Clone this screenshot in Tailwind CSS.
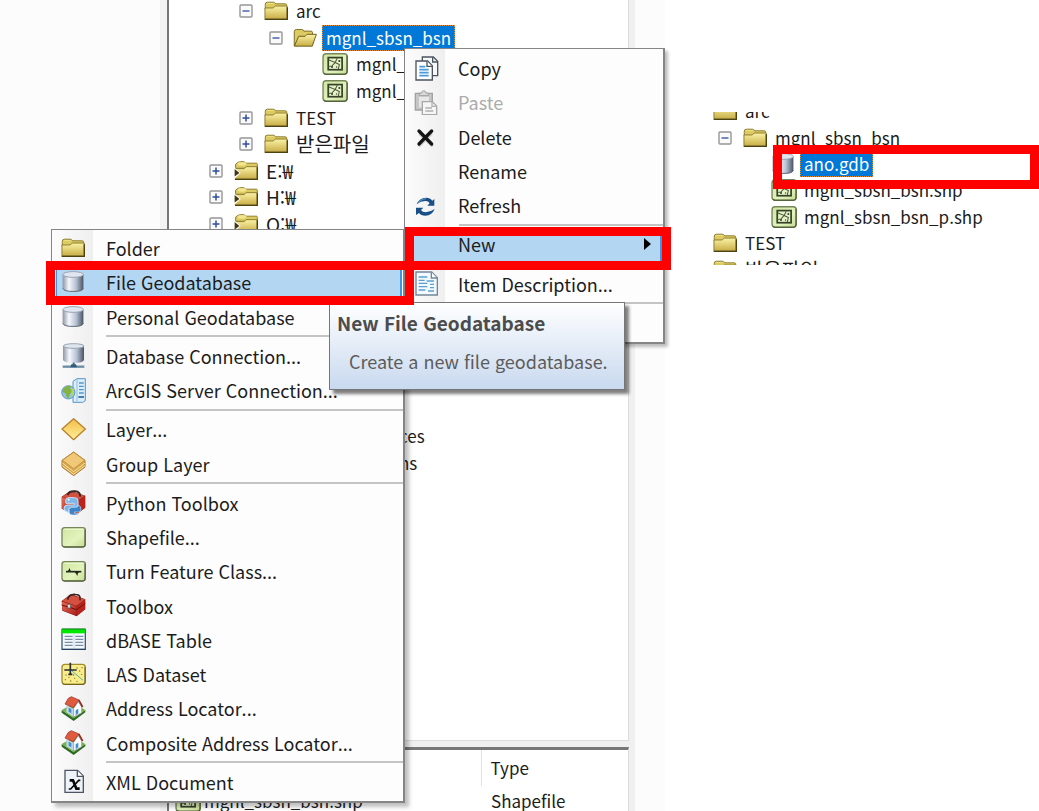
<!DOCTYPE html>
<html lang="ko">
<head>
  <meta charset="utf-8">
  <meta name="viewport" content="width=device-width, initial-scale=1">
  <title>Catalog</title>
  <script src="https://cdn.jsdelivr.net/npm/@tailwindcss/browser@4"></script>
</head>
<body class="bg-white font-['Noto_Sans_CJK_KR','Noto_Sans',sans-serif] text-[18px] leading-6 text-[#1c1c1c]">

<!-- Icon sprite -->
<svg width="0" height="0" class="absolute" aria-hidden="true">
  <defs>
    <linearGradient id="gold" x1="0" y1="0" x2="0" y2="1"><stop offset="0" stop-color="#fbf3a8"/><stop offset="1" stop-color="#c9ae45"/></linearGradient>
    <linearGradient id="steel" x1="0" x2="1"><stop offset="0" stop-color="#8b95a4"/><stop offset=".3" stop-color="#f6f8fc"/><stop offset=".65" stop-color="#b6c2d3"/><stop offset="1" stop-color="#485263"/></linearGradient>
    <linearGradient id="amber" x1="0" y1="0" x2="0" y2="1"><stop offset="0" stop-color="#f2bd4a"/><stop offset="1" stop-color="#fff09a"/></linearGradient>
    <linearGradient id="lime" x1="0" y1="0" x2="1" y2="1"><stop offset="0" stop-color="#cfe6a0"/><stop offset=".6" stop-color="#e3f3bd"/><stop offset="1" stop-color="#c5dc92"/></linearGradient>
    <linearGradient id="red" x1="0" y1="0" x2="1" y2="1"><stop offset="0" stop-color="#e46a58"/><stop offset="1" stop-color="#a81f18"/></linearGradient>

    <symbol id="folder" viewBox="0 0 75 75">
      <path d="M4 20v-4q0-6 7-6h18q5 0 7 5h30q5 0 5 5v12H4z" fill="#dccb62" stroke="#8c7a2c" stroke-width="3"/>
      <path d="M8 16q1-3 5-3h14q4 0 6 3z" fill="#f3e68f"/>
      <path d="M3 28h26l6-6h37v40H3z" fill="url(#gold)" stroke="#8c7a2c" stroke-width="3"/>
      <path d="M2 64h71V26" fill="none" stroke="#4d430f" stroke-width="4"/>
    </symbol>
    <symbol id="folder-open" viewBox="0 0 75 75">
      <path d="M4 62V17q0-6 7-6h16q5 0 7 5h22q5 0 5 5v12H22z" fill="#dccb62" stroke="#7d6b22" stroke-width="3"/>
      <path d="M4 63 18 32h20l6-6h29L60 63z" fill="url(#gold)" stroke="#6b5b18" stroke-width="3"/>
    </symbol>
    <symbol id="folder-link" viewBox="0 0 75 75">
      <path d="M5 26V16q6-8 20-8 9 0 12 5h33q3 0 3 4v12H5z" fill="#dccb62" stroke="#8c7a2c" stroke-width="3"/>
      <ellipse cx="25" cy="15" rx="14" ry="6" fill="#f3e68f"/>
      <path d="M4 30h28l6-6h34v38H4z" fill="url(#gold)" stroke="#8c7a2c" stroke-width="3"/>
      <path d="M3 64h70V26" fill="none" stroke="#4d430f" stroke-width="4"/>
      <path d="M0 28h3l18 16L3 60H0z" fill="#fff"/><path d="M2 31v24l15-11z" fill="#403712"/>
    </symbol>
    <symbol id="shape" viewBox="0 0 75 75">
      <rect x="3" y="8" width="70" height="59" rx="9" fill="url(#lime)" stroke="#77865a" stroke-width="4"/>
      <path d="M5 64q2 3 6 3h55q5 0 6-6V14" fill="none" stroke="#4b5936" stroke-width="3"/>
      <rect x="18" y="19" width="40" height="35" fill="#e6f3c6" stroke="#37422a" stroke-width="5"/>
      <path d="M20 26l18 7 6-12M38 33l12 6-3 13M38 33l-9 10-8 2" fill="none" stroke="#4a563a" stroke-width="3"/>
      <circle cx="29" cy="46" r="3" fill="#37422a"/><circle cx="50" cy="29" r="3" fill="#37422a"/><circle cx="42" cy="46" r="2" fill="#37422a"/>
    </symbol>
    <symbol id="db" viewBox="0 0 75 75">
      <path d="M5 14v44q4 10 33 10t32-10V14z" fill="url(#steel)"/>
      <path d="M6 58q4 9 32 9t32-9" fill="none" stroke="#5b6575" stroke-width="3"/>
      <ellipse cx="38" cy="14" rx="32" ry="9" fill="#dfe6ef" stroke="#97a1b0" stroke-width="3"/>
    </symbol>
    <symbol id="db-net" viewBox="0 0 75 75">
      <path d="M6 9v42q4 9 32 9t31-9V9z" fill="url(#steel)"/>
      <ellipse cx="38" cy="9" rx="31" ry="7" fill="#dfe6ef" stroke="#97a1b0" stroke-width="3"/>
      <path d="M38 59v10" stroke="#3c6684" stroke-width="6"/><path d="M5 71h65" stroke="#6a8ca6" stroke-width="7"/><path d="M31 64h14l3 9H28z" fill="#335c79"/>
    </symbol>
    <symbol id="server" viewBox="0 0 75 75">
      <path d="M36 10 48 2h25v66l-8 5H36z" fill="#d9edfa" stroke="#5797c4" stroke-width="3"/>
      <path d="M48 4v66" stroke="#8fbfe0" stroke-width="3"/>
      <path d="M54 15h14M54 25h14M54 35h14M54 45h14" stroke="#5797c4" stroke-width="4"/><path d="M52 57h17" stroke="#2d689a" stroke-width="5"/>
      <circle cx="22" cy="43" r="20" fill="#8fc3e4" stroke="#3f7ba8" stroke-width="2"/>
      <path d="M7 32q10-11 23-8l-3 8 9 7-9 9-4 13q-9-3-8-14l-10-5z" fill="#84b343"/><path d="M32 30l8 4-2 17-8 6z" fill="#b5d667"/>
    </symbol>
    <symbol id="layer" viewBox="0 0 75 75">
      <path d="M38 5 73 36 38 68 3 36z" fill="url(#amber)" stroke="#b8822a" stroke-width="4" stroke-linejoin="round"/>
    </symbol>
    <symbol id="layers" viewBox="0 0 75 75">
      <path d="M38 3 72 28v20L38 74 3 48V28z" fill="#d7a54a" stroke="#a7772f" stroke-width="3"/>
      <path d="M4 36l34 26 34-26M4 44l34 26 34-26" fill="none" stroke="#fbe5a3" stroke-width="3"/>
      <path d="M38 4 71 28 38 53 4 28z" fill="#f0c877" stroke="#b88638" stroke-width="2"/>
    </symbol>
    <symbol id="toolbox" viewBox="0 0 75 75">
      <path d="M2 24 30 3l43 16v30L47 70 4 53z" fill="#8c1b16"/>
      <path d="M3 26 46 39v29L4 52z" fill="url(#red)"/><path d="M3 24 30 6l42 13-25 19z" fill="#d4503f"/>
      <path d="M47 39 72 21v27L47 68z" fill="#b9231b"/>
      <path d="M20 20q2-17 23-16 17 0 14 18" fill="none" stroke="#3b2524" stroke-width="5"/>
      <path d="M2 36l45 14 26-19" fill="none" stroke="#641311" stroke-width="3"/><path d="M20 34h8v11h-8z" fill="#eee" stroke="#555" stroke-width="2"/>
    </symbol>
    <symbol id="python" viewBox="0 0 75 75">
      <path d="M2 20 28 2l45 15v36L45 74 2 56z" fill="#8c1b16"/>
      <path d="M3 21 45 36v36L3 56z" fill="url(#red)"/><path d="M4 20 28 3l44 14-27 18z" fill="#d4503f"/>
      <path d="M46 36 72 19v34L46 73z" fill="#b9231b"/>
      <path d="M20 15q4-12 22-11 17 1 15 16" fill="none" stroke="#3b2524" stroke-width="6"/>
      <path d="M14 31q0-8 10-8h16q11 0 11 9v13q0 7-8 7H29q-6 0-6 6v9q-13-1-14-12 0-9 10-10h21v-5H15z" fill="#7db7e9" stroke="#c9e2f7" stroke-width="3"/>
      <path d="M25 59q0-7 8-7h12q6 0 6-7 9 2 9 13 0 7-8 8H40v4h13q-2 5-13 5-15 0-15-7z" fill="#3c83c8" stroke="#c9e2f7" stroke-width="2"/>
      <circle cx="23" cy="29" r="3" fill="#fff"/>
    </symbol>
    <symbol id="shapefile" viewBox="0 0 75 75">
      <rect x="3" y="8" width="70" height="58" rx="8" fill="url(#lime)" stroke="#77865a" stroke-width="4"/>
      <path d="M5 63q2 3 6 3h55q6 0 6-6V14" fill="none" stroke="#4b5936" stroke-width="3"/>
      <path d="M10 13h56" stroke="#edf8d4" stroke-width="3"/>
    </symbol>
    <symbol id="turn" viewBox="0 0 75 75">
      <use href="#shapefile" width="75" height="75"/>
      <path d="M15 38h46" stroke="#20281a" stroke-width="5"/><path d="M19 39l7-12 4 12zM41 38h15l-5 4-2 9-4-7z" fill="#20281a"/>
    </symbol>
    <symbol id="dbase" viewBox="0 0 75 75">
      <path d="M3 7h70v60H3z" fill="#f3f8ff" stroke="#3f5f80" stroke-width="4"/><path d="M3 6h70v13H3z" fill="#00e800"/><path d="M3 6h70" stroke="#12851d" stroke-width="3"/>
      <path d="M11 28h24M11 37h24M11 46h24M11 55h24M43 28h24M43 37h24M43 46h24M43 55h24" stroke="#7d8da2" stroke-width="4"/>
      <path d="M39 20v44" stroke="#bccada" stroke-width="2"/><path d="M3 67h71" stroke="#243a56" stroke-width="3"/>
    </symbol>
    <symbol id="las" viewBox="0 0 75 75">
      <rect x="3" y="7" width="70" height="60" rx="9" fill="#f8ec8b" stroke="#a38d2c" stroke-width="4"/>
      <path d="M5 64q2 3 6 3h55q6 0 6-6V15" fill="none" stroke="#6c5b17" stroke-width="3"/>
      <path d="M31 25 66 55" stroke="#55b4b0" stroke-width="3"/>
      <g fill="#80712a"><circle cx="15" cy="39" r="2"/><circle cx="24" cy="46" r="2"/><circle cx="13" cy="53" r="2"/><circle cx="29" cy="57" r="2"/><circle cx="41" cy="49" r="2"/><circle cx="48" cy="58" r="2"/><circle cx="56" cy="27" r="2"/><circle cx="62" cy="37" r="2"/><circle cx="48" cy="18" r="2"/><circle cx="63" cy="17" r="2"/><circle cx="38" cy="39" r="2"/></g>
      <path d="M28 2v36M10 24h37M22 37h12" stroke="#292d35" stroke-width="5"/>
    </symbol>
    <symbol id="house" viewBox="0 0 75 75">
      <path d="M2 42 38 66l35-24v7L38 75 2 50z" fill="#2f6b22"/><path d="M2 42 38 22l35 20-35 25z" fill="#72b54a"/>
      <path d="M16 27 38 39v24L16 49z" fill="#c2d6e6"/><path d="M38 37 52 17l10 16v17L38 63z" fill="#fff" stroke="#8d9098" stroke-width="2"/>
      <path d="M44 43l8-5v14l-8 6z" fill="#3e8fd0"/><path d="M23 35l8 4v13l-8-5z" fill="#3e8fd0"/>
      <path d="M12 24 22 7 31 2l23 10-17 23z" fill="#e05a3f" stroke="#8f2d1d" stroke-width="2"/><path d="M53 12 65 33" stroke="#8f2d1d" stroke-width="5"/>
    </symbol>
    <symbol id="xml" viewBox="0 0 75 75">
      <path d="M12 4h38l17 17v49H12z" fill="#edf3f8" stroke="#4c5662" stroke-width="4"/><path d="M49 5v17h17" fill="#fff" stroke="#4c5662" stroke-width="4"/>
      <path d="M26 34h10l10 25h10" fill="none" stroke="#080808" stroke-width="8"/><path d="M58 34h-5L29 60h-6" fill="none" stroke="#080808" stroke-width="5"/>
    </symbol>
    <symbol id="copy" viewBox="0 0 75 75">
      <path d="M25 3h33l13 13v43H25z" fill="#f6f8fa" stroke="#4c545d" stroke-width="4"/><path d="M56 4v14h14" fill="none" stroke="#4c545d" stroke-width="4"/>
      <path d="M6 15h35l14 14v43H6z" fill="#fff" stroke="#4c545d" stroke-width="4"/><path d="M39 16v15h15" fill="#fff" stroke="#4c545d" stroke-width="4"/>
      <path d="M16 32h18M16 41h28M16 50h28M16 59h28" stroke="#4a9bdc" stroke-width="5"/>
    </symbol>
    <symbol id="paste" viewBox="0 0 75 75">
      <path d="M4 10h51v50H4z" fill="#c6c6c6" stroke="#a2a2a2" stroke-width="4"/><path d="M15 20h30v32H15z" fill="#e8e8e8"/>
      <path d="M16 17v-8h7q0-7 6-7t7 7h7v8z" fill="#d8d8d8" stroke="#a2a2a2" stroke-width="3"/>
      <path d="M25 35h30l13 13v26H25z" fill="#f6f6f6" stroke="#a9a9a9" stroke-width="4"/><path d="M54 36v13h13M34 54h20M34 63h24" fill="none" stroke="#b0b0b0" stroke-width="4"/>
    </symbol>
    <symbol id="delete" viewBox="0 0 75 75">
      <path d="M16 28 56 67M53 28 14 67" stroke="#d0d0d0" stroke-width="9"/><path d="M15 21 53 60M53 21 15 60" stroke="#151515" stroke-width="10" stroke-linecap="round"/>
    </symbol>
    <symbol id="refresh" viewBox="0 0 75 75">
      <path d="M8 34q8-20 28-20 13 0 19 9l6-5v20H40l7-7q-4-8-14-7-13 0-25 10z" fill="#174f86"/>
      <path d="M62 48q-8 20-28 20-13 0-19-8l-9 6V44h22l-7 7q4 7 14 7 13 0 27-10z" fill="#174f86"/>
      <path d="M9 33q10-14 27-16" fill="none" stroke="#5f9acb" stroke-width="3"/>
    </symbol>
    <symbol id="doc" viewBox="0 0 75 75">
      <path d="M6 3h47l17 17v52H6z" fill="#f2f9ff" stroke="#71879b" stroke-width="4"/><path d="M52 4v17h17" fill="#fff" stroke="#71879b" stroke-width="4"/>
      <path d="M14 18h26M14 28h18M38 30h22M14 37h26M48 40h12M14 47h26M48 50h12M14 57h20M42 60h18" stroke="#5d9fd1" stroke-width="4"/>
    </symbol>
    <symbol id="minus" viewBox="0 0 14 14">
      <rect x="1" y="1" width="12" height="12" rx="1" fill="#fafafa" stroke="#969696" stroke-width="1.4"/><path d="M3.5 7h7" stroke="#4059a5" stroke-width="1.4"/>
    </symbol>
    <symbol id="plus" viewBox="0 0 14 14">
      <rect x="1" y="1" width="12" height="12" rx="1" fill="#fafafa" stroke="#969696" stroke-width="1.4"/><path d="M3.5 7h7M7 3.500v7" stroke="#314d9e" stroke-width="1.5"/>
    </symbol>
  </defs>
</svg>

<div class="relative flex h-screen overflow-hidden">

  <!-- Catalog dialog -->
  <main class="flex w-[64%] bg-[#fcfcfc]">
    <div class="ml-[160px] w-[7px] bg-[#f3f3f3]"></div>
    <div class="flex min-w-0 flex-1 flex-col bg-[#f0f0f0] text-[17px]">
      <section class="flex-1 overflow-hidden border-r border-b border-l-2 border-r-[#dcdcdc] border-b-[#dcdcdc] border-l-[#777] bg-white" aria-label="Catalog tree">
        <ul class="-mt-[2px] flex h-[478px] flex-col whitespace-nowrap">
          <li class="flex flex-1 items-center pl-[70px]"><button class="mr-[11px]" aria-label="Collapse arc"><svg class="size-[14px]"><use href="#minus"/></svg></button><svg class="mr-2 size-6"><use href="#folder"/></svg>arc</li>
          <li class="flex flex-1 items-center pl-[100px]"><button class="mr-[10px]" aria-label="Collapse mgnl_sbsn_bsn"><svg class="size-[14px]"><use href="#minus"/></svg></button><svg class="mr-[5px] size-6"><use href="#folder-open"/></svg><span class="border border-dotted border-[#e08a3c] bg-[#0078d7] px-[3px] text-white">mgnl_sbsn_bsn</span></li>
          <li class="flex flex-1 items-center pl-[153px]"><svg class="mr-2 size-[26px]"><use href="#shape"/></svg>mgnl_</li>
          <li class="flex flex-1 items-center pl-[153px]"><svg class="mr-2 size-[26px]"><use href="#shape"/></svg>mgnl_</li>
          <li class="flex flex-1 items-center pl-[70px]"><button class="mr-[11px]" aria-label="Expand TEST"><svg class="size-[14px]"><use href="#plus"/></svg></button><svg class="mr-2 size-6"><use href="#folder"/></svg>TEST</li>
          <li class="flex flex-1 items-center pl-[70px]"><button class="mr-[11px]" aria-label="Expand 받은파일"><svg class="size-[14px]"><use href="#plus"/></svg></button><svg class="mr-2 size-6"><use href="#folder"/></svg><span class="text-[20px]">받은파일</span></li>
          <li class="flex flex-1 items-center pl-10"><button class="mr-[11px]" aria-label="Expand E"><svg class="size-[14px]"><use href="#plus"/></svg></button><svg class="mr-2 size-6"><use href="#folder-link"/></svg><span class="text-[19px]">E:₩</span></li>
          <li class="flex flex-1 items-center pl-10"><button class="mr-[11px]" aria-label="Expand H"><svg class="size-[14px]"><use href="#plus"/></svg></button><svg class="mr-2 size-6"><use href="#folder-link"/></svg><span class="text-[19px]">H:₩</span></li>
          <li class="flex flex-1 items-center pl-10"><button class="mr-[11px]" aria-label="Expand O"><svg class="size-[14px]"><use href="#plus"/></svg></button><svg class="mr-2 size-6"><use href="#folder-link"/></svg><span class="text-[19px]">O:₩</span></li>
          <li class="flex-[7]"></li>
          <li class="flex flex-1 items-center pl-[230px]">ces</li>
          <li class="flex flex-1 items-center pl-[230px]">ns</li>
        </ul>
      </section>

      <section class="mt-[6px] h-[64px] overflow-hidden border-t-[3px] border-r border-l-2 border-t-[#777] border-r-[#dcdcdc] border-l-[#777] bg-white">
        <table class="w-full table-fixed whitespace-nowrap text-left">
          <thead>
            <tr class="h-[36px]">
              <th class="w-[312px] border-r border-[#e2e2e2] font-normal"></th>
              <th class="pl-[9px] font-normal">Type</th>
            </tr>
          </thead>
          <tbody>
            <tr class="h-[30px]">
              <td class="pl-[6px]"><div class="flex items-center"><svg class="mr-[3px] size-[26px]"><use href="#shape"/></svg>mgnl_sbsn_bsn.shp</div></td>
              <td class="pl-[10px]">Shapefile</td>
            </tr>
          </tbody>
        </table>
      </section>
    </div>
    <div class="w-[6px] bg-[#f0f0f0]"></div>
    <div class="w-[30px]"></div>
  </main>

  <!-- Tree after the geodatabase is created -->
  <aside class="mt-28 ml-12 h-[153px] flex-1 overflow-hidden text-[17px]">
    <ul class="-mt-[14px] flex h-[185px] flex-col whitespace-nowrap">
      <li class="flex flex-1 items-center"><svg class="mr-2 size-6"><use href="#folder"/></svg>arc</li>
      <li class="flex flex-1 items-center pl-[5px]"><button class="mr-[11px]" aria-label="Collapse mgnl_sbsn_bsn"><svg class="size-[14px]"><use href="#minus"/></svg></button><svg class="mr-2 size-6"><use href="#folder"/></svg>mgnl_sbsn_bsn</li>
      <li class="flex flex-1 items-center pl-[58px]"><svg class="mr-[5px] size-6"><use href="#db"/></svg><span class="border border-dotted border-[#e08a3c] bg-[#0078d7] px-[3px] text-white">ano.gdb</span></li>
      <li class="flex flex-1 items-center pl-[58px]"><svg class="mr-[7px] size-[26px]"><use href="#shape"/></svg>mgnl_sbsn_bsn.shp</li>
      <li class="flex flex-1 items-center pl-[58px]"><svg class="mr-[7px] size-[26px]"><use href="#shape"/></svg>mgnl_sbsn_bsn_p.shp</li>
      <li class="flex flex-1 items-center"><svg class="mr-2 size-6"><use href="#folder"/></svg>TEST</li>
      <li class="flex flex-1 items-center"><svg class="mr-2 size-6"><use href="#folder"/></svg><span class="text-[20px]">받은파일</span></li>
    </ul>
  </aside>

  <!-- Context menu -->
  <div role="menu" class="absolute top-12 left-[404px] flex h-[296px] w-[261px] flex-col border border-r-2 border-b-2 border-[#858585] bg-[linear-gradient(to_right,#fcfcfc,#efefef_40px,#fdfdfd_40px)] pt-[2px] pr-px pb-[2px] pl-1 shadow-[3px_3px_3px_rgba(0,0,0,0.25)]">
    <button role="menuitem" class="flex flex-1 items-center gap-4 border border-transparent text-left"><span class="flex w-8 justify-center"><svg class="size-[25px]"><use href="#copy"/></svg></span>Copy</button>
    <button role="menuitem" disabled class="flex flex-1 items-center gap-4 border border-transparent text-left text-[#ababab]"><span class="flex w-8 justify-center"><svg class="size-[25px]"><use href="#paste"/></svg></span>Paste</button>
    <button role="menuitem" class="flex flex-1 items-center gap-4 border border-transparent text-left"><span class="flex w-8 justify-center"><svg class="size-[25px]"><use href="#delete"/></svg></span>Delete</button>
    <button role="menuitem" class="flex flex-1 items-center gap-4 border border-transparent text-left"><span class="w-8"></span>Rename</button>
    <button role="menuitem" class="flex flex-1 items-center gap-4 border border-transparent text-left"><span class="flex w-8 justify-center"><svg class="size-[25px]"><use href="#refresh"/></svg></span>Refresh</button>
    <div role="separator" class="-mr-px ml-[50px] flex h-[5px] items-center"><div class="h-[2px] w-full bg-[#c4c4c4]"></div></div>
    <button role="menuitem" aria-haspopup="menu" class="flex flex-1 items-center gap-4 border border-r-2 border-[#3a96e6] bg-[#b3d7f3] text-left"><span class="w-8"></span>New<svg class="mr-[9px] ml-auto h-3 w-[7px]" viewBox="0 0 7 12"><path d="M0 0l7 6-7 6z" fill="#000"/></svg></button>
    <div role="separator" class="-mr-px ml-[50px] flex h-[5px] items-center"><div class="h-[2px] w-full bg-[#c4c4c4]"></div></div>
    <button role="menuitem" class="flex flex-1 items-center gap-4 border border-transparent text-left"><span class="flex w-8 justify-center"><svg class="size-[25px]"><use href="#doc"/></svg></span>Item Description...</button>
    <div role="separator" class="-mr-px ml-[50px] flex h-[5px] items-center"><div class="h-[2px] w-full bg-[#c4c4c4]"></div></div>
    <button role="menuitem" aria-label="Properties" class="flex-1 border border-transparent"></button>
  </div>

  <!-- New submenu -->
  <div role="menu" class="absolute top-[229px] left-[51px] flex h-[574px] w-[354px] flex-col border border-r-2 border-b-2 border-[#858585] bg-[linear-gradient(to_right,#fcfcfc,#efefef_41px,#fdfdfd_41px)] pt-px pr-px pb-[2px] pl-1 shadow-[4px_4px_4px_rgba(0,0,0,0.25)]">
    <button role="menuitem" class="flex flex-1 items-center gap-[17px] border border-transparent text-left"><span class="flex w-8 justify-center"><svg class="size-6"><use href="#folder"/></svg></span>Folder</button>
    <button role="menuitem" class="flex flex-1 items-center gap-[17px] border border-r-2 border-[#3a96e6] bg-[#b3d7f3] text-left"><span class="flex w-8 justify-center"><svg class="size-6"><use href="#db"/></svg></span>File Geodatabase</button>
    <button role="menuitem" class="flex flex-1 items-center gap-[17px] border border-transparent text-left"><span class="flex w-8 justify-center"><svg class="size-6"><use href="#db"/></svg></span>Personal Geodatabase</button>
    <div role="separator" class="-mr-px ml-[50px] flex h-[5px] items-center"><div class="h-[2px] w-full bg-[#c4c4c4]"></div></div>
    <button role="menuitem" class="flex flex-1 items-center gap-[17px] border border-transparent text-left"><span class="flex w-8 justify-center"><svg class="size-[25px]"><use href="#db-net"/></svg></span>Database Connection...</button>
    <button role="menuitem" class="flex flex-1 items-center gap-[17px] border border-transparent text-left"><span class="flex w-8 justify-center"><svg class="size-[25px]"><use href="#server"/></svg></span>ArcGIS Server Connection...</button>
    <div role="separator" class="-mr-px ml-[50px] flex h-[5px] items-center"><div class="h-[2px] w-full bg-[#c4c4c4]"></div></div>
    <button role="menuitem" class="flex flex-1 items-center gap-[17px] border border-transparent text-left"><span class="flex w-8 justify-center"><svg class="size-[25px]"><use href="#layer"/></svg></span>Layer...</button>
    <button role="menuitem" class="flex flex-1 items-center gap-[17px] border border-transparent text-left"><span class="flex w-8 justify-center"><svg class="size-[25px]"><use href="#layers"/></svg></span>Group Layer</button>
    <div role="separator" class="-mr-px ml-[50px] flex h-[5px] items-center"><div class="h-[2px] w-full bg-[#c4c4c4]"></div></div>
    <button role="menuitem" class="flex flex-1 items-center gap-[17px] border border-transparent text-left"><span class="flex w-8 justify-center"><svg class="size-[25px]"><use href="#python"/></svg></span>Python Toolbox</button>
    <button role="menuitem" class="flex flex-1 items-center gap-[17px] border border-transparent text-left"><span class="flex w-8 justify-center"><svg class="size-[25px]"><use href="#shapefile"/></svg></span>Shapefile...</button>
    <button role="menuitem" class="flex flex-1 items-center gap-[17px] border border-transparent text-left"><span class="flex w-8 justify-center"><svg class="size-[25px]"><use href="#turn"/></svg></span>Turn Feature Class...</button>
    <button role="menuitem" class="flex flex-1 items-center gap-[17px] border border-transparent text-left"><span class="flex w-8 justify-center"><svg class="size-[25px]"><use href="#toolbox"/></svg></span>Toolbox</button>
    <button role="menuitem" class="flex flex-1 items-center gap-[17px] border border-transparent text-left"><span class="flex w-8 justify-center"><svg class="size-[25px]"><use href="#dbase"/></svg></span>dBASE Table</button>
    <button role="menuitem" class="flex flex-1 items-center gap-[17px] border border-transparent text-left"><span class="flex w-8 justify-center"><svg class="size-[25px]"><use href="#las"/></svg></span>LAS Dataset</button>
    <button role="menuitem" class="flex flex-1 items-center gap-[17px] border border-transparent text-left"><span class="flex w-8 justify-center"><svg class="size-[25px]"><use href="#house"/></svg></span>Address Locator...</button>
    <button role="menuitem" class="flex flex-1 items-center gap-[17px] border border-transparent text-left"><span class="flex w-8 justify-center"><svg class="size-[25px]"><use href="#house"/></svg></span>Composite Address Locator...</button>
    <div role="separator" class="-mr-px ml-[50px] flex h-[5px] items-center"><div class="h-[2px] w-full bg-[#c4c4c4]"></div></div>
    <button role="menuitem" class="flex flex-1 items-center gap-[17px] border border-transparent text-left"><span class="flex w-8 justify-center"><svg class="size-[25px]"><use href="#xml"/></svg></span>XML Document</button>
  </div>

  <!-- Tooltip -->
  <div role="tooltip" class="absolute top-[302px] left-[329px] h-[88px] w-[296px] border border-[#767676] bg-linear-to-b from-white to-[#c9d9ef] px-[7px] pt-2 whitespace-nowrap text-[#4c4c4c] shadow-[4px_4px_3px_rgba(0,0,0,0.5)]">
    <p class="text-[19px] font-bold">New File Geodatabase</p>
    <p class="mt-[14px] pl-3 text-[#5c5c5c]">Create a new file geodatabase.</p>
  </div>

  <!-- Callouts -->
  <div class="absolute top-[227px] left-[405px] h-[43px] w-[266px] border-[9px] border-[#ff0000]"></div>
  <div class="absolute top-[261px] left-[46px] h-11 w-[368px] border-[9px] border-[#ff0000]"></div>
  <div class="absolute top-[145px] left-[773px] h-11 w-[266px] border-[9px] border-[#ff0000]"></div>
</div>
</body>
</html>
